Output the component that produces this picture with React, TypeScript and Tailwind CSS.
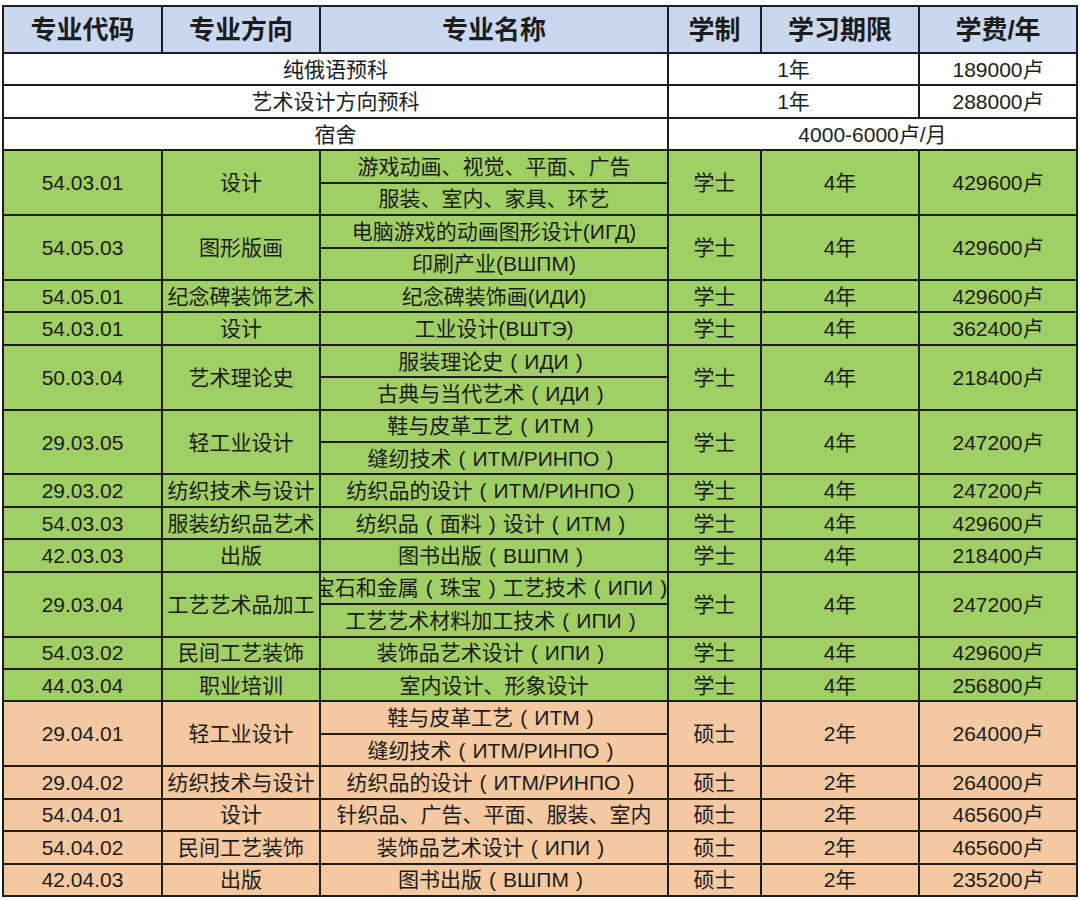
import React from "react";

type Group = {
  code: string;
  dir: string;
  names: string[];
  degree: string;
  dur: string;
  fee: string;
  master?: boolean;
};

const groups: Group[] = [
  { code: "54.03.01", dir: "设计", names: ["游戏动画、视觉、平面、广告", "服装、室内、家具、环艺"], degree: "学士", dur: "4年", fee: "429600卢" },
  { code: "54.05.03", dir: "图形版画", names: ["电脑游戏的动画图形设计(ИГД)", "印刷产业(ВШПМ)"], degree: "学士", dur: "4年", fee: "429600卢" },
  { code: "54.05.01", dir: "纪念碑装饰艺术", names: ["纪念碑装饰画(ИДИ)"], degree: "学士", dur: "4年", fee: "429600卢" },
  { code: "54.03.01", dir: "设计", names: ["工业设计(ВШТЭ)"], degree: "学士", dur: "4年", fee: "362400卢" },
  { code: "50.03.04", dir: "艺术理论史", names: ["服装理论史（ИДИ）", "古典与当代艺术（ИДИ）"], degree: "学士", dur: "4年", fee: "218400卢" },
  { code: "29.03.05", dir: "轻工业设计", names: ["鞋与皮革工艺（ИТМ）", "缝纫技术（ИТМ/РИНПО）"], degree: "学士", dur: "4年", fee: "247200卢" },
  { code: "29.03.02", dir: "纺织技术与设计", names: ["纺织品的设计（ИТМ/РИНПО）"], degree: "学士", dur: "4年", fee: "247200卢" },
  { code: "54.03.03", dir: "服装纺织品艺术", names: ["纺织品（面料）设计（ИТМ）"], degree: "学士", dur: "4年", fee: "429600卢" },
  { code: "42.03.03", dir: "出版", names: ["图书出版（ВШПМ）"], degree: "学士", dur: "4年", fee: "218400卢" },
  { code: "29.03.04", dir: "工艺艺术品加工", names: ["宝石和金属（珠宝）工艺技术（ИПИ）", "工艺艺术材料加工技术（ИПИ）"], degree: "学士", dur: "4年", fee: "247200卢" },
  { code: "54.03.02", dir: "民间工艺装饰", names: ["装饰品艺术设计（ИПИ）"], degree: "学士", dur: "4年", fee: "429600卢" },
  { code: "44.03.04", dir: "职业培训", names: ["室内设计、形象设计"], degree: "学士", dur: "4年", fee: "256800卢" },
  { code: "29.04.01", dir: "轻工业设计", names: ["鞋与皮革工艺（ИТМ）", "缝纫技术（ИТМ/РИНПО）"], degree: "硕士", dur: "2年", fee: "264000卢", master: true },
  { code: "29.04.02", dir: "纺织技术与设计", names: ["纺织品的设计（ИТМ/РИНПО）"], degree: "硕士", dur: "2年", fee: "264000卢", master: true },
  { code: "54.04.01", dir: "设计", names: ["针织品、广告、平面、服装、室内"], degree: "硕士", dur: "2年", fee: "465600卢", master: true },
  { code: "54.04.02", dir: "民间工艺装饰", names: ["装饰品艺术设计（ИПИ）"], degree: "硕士", dur: "2年", fee: "465600卢", master: true },
  { code: "42.04.03", dir: "出版", names: ["图书出版（ВШПМ）"], degree: "硕士", dur: "2年", fee: "235200卢", master: true },
];

const cellBase =
  "flex items-center justify-center overflow-hidden whitespace-nowrap";

function Cell({
  className,
  bg,
  children,
}: {
  className?: string;
  bg: string;
  children?: React.ReactNode;
}) {
  return <div className={`${cellBase} ${bg} ${className ?? ""}`}>{children}</div>;
}

function Name({ text }: { text: string }) {
  const parts = text.split(/([（）])/);
  return (
    <span className="inline-flex items-center">
      {parts.map((p, i) =>
        p === "（" || p === "）" ? (
          <span
            key={i}
            className="inline-block w-[21px] text-center font-['Liberation_Sans',sans-serif]"
          >
            {p === "（" ? "(" : ")"}
          </span>
        ) : (
          <span key={i}>{p}</span>
        )
      )}
    </span>
  );
}

export default function App() {
  const headers = ["专业代码", "专业方向", "专业名称", "学制", "学习期限", "学费/年"];
  return (
    <div className="w-[1080px] h-[900px] bg-white pt-[5px] pl-[2px] font-['Liberation_Sans','Noto_Sans_CJK_SC',sans-serif] text-[#1c1c1c]">
      <div className="grid w-[1076px] h-[892px] p-[2px] gap-[2px] bg-[#1e1e1e] grid-cols-[157px_156px_346px_91px_156px_156px] grid-rows-[45px_repeat(26,minmax(0,1fr))] text-[21px] leading-none">
        {headers.map((h) => (
          <Cell key={h} bg="bg-[#c9d8ee]" className="text-[26px] font-bold">
            {h}
          </Cell>
        ))}

        <Cell bg="bg-white" className="col-span-3">纯俄语预科</Cell>
        <Cell bg="bg-white" className="col-span-2">1年</Cell>
        <Cell bg="bg-white">189000卢</Cell>

        <Cell bg="bg-white" className="col-span-3">艺术设计方向预科</Cell>
        <Cell bg="bg-white" className="col-span-2">1年</Cell>
        <Cell bg="bg-white">288000卢</Cell>

        <Cell bg="bg-white" className="col-span-3">宿舍</Cell>
        <Cell bg="bg-white" className="col-span-3">4000-6000卢/月</Cell>

        {groups.map((g, i) => {
          const bg = g.master ? "bg-[#f4c8a0]" : "bg-[#a0cf66]";
          const span = g.names.length === 2 ? "row-span-2" : "";
          return (
            <React.Fragment key={i}>
              <Cell bg={bg} className={span}>{g.code}</Cell>
              <Cell bg={bg} className={span}>{g.dir}</Cell>
              <Cell bg={bg}><Name text={g.names[0]} /></Cell>
              <Cell bg={bg} className={span}>{g.degree}</Cell>
              <Cell bg={bg} className={span}>{g.dur}</Cell>
              <Cell bg={bg} className={span}>{g.fee}</Cell>
              {g.names.length === 2 && (
                <Cell bg={bg}><Name text={g.names[1]} /></Cell>
              )}
            </React.Fragment>
          );
        })}
      </div>
    </div>
  );
}
